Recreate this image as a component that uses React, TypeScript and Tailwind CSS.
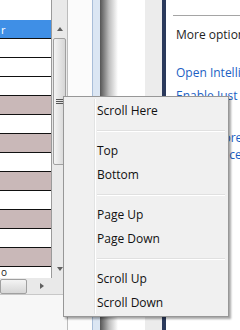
import React from "react";

const rows = ["blue", "white", "white", "white", "mauve", "white", "mauve", "white", "mauve", "white", "mauve", "white", "mauve"];

function ArrowUp() {
  return <div className="w-0 h-0 border-l-[3px] border-r-[3px] border-b-[4px] border-l-transparent border-r-transparent border-b-[#606060]" />;
}
function ArrowDown() {
  return <div className="w-0 h-0 border-l-[3px] border-r-[3px] border-t-[4px] border-l-transparent border-r-transparent border-t-[#606060]" />;
}
function ArrowRight() {
  return <div className="w-0 h-0 border-t-[3px] border-b-[3px] border-l-[4px] border-t-transparent border-b-transparent border-l-[#606060]" />;
}

function MenuItem({ label }: { label: string }) {
  return (
    <div className="h-[24px] flex items-center pl-[33px] text-[12px] text-[#111]">{label}</div>
  );
}

function Separator() {
  return (
    <div className="h-[16px] flex flex-col justify-center pl-[33px] pr-[3px]">
      <div className="border-t border-[#e0e0e0]" />
      <div className="border-t border-white" />
    </div>
  );
}

export default function App() {
  return (
    <div
      className="relative w-[240px] h-[330px] overflow-hidden flex bg-white"
      style={{ fontFamily: '"Open Sans", "Noto Sans", sans-serif' }}
    >
      {/* list with scrollbars */}
      <div className="w-[68px] shrink-0 flex flex-col border-r border-[#bcbcbc]">
        <div className="flex h-[278px]">
          <div className="w-[52px] flex flex-col overflow-hidden border-r border-[#9a9a9a]">
            <div className="h-[20px] shrink-0 bg-white" />
            {rows.map((r, i) => (
              <div
                key={i}
                className={`h-[19px] shrink-0 border-b border-[#111] flex items-center pl-[1px] text-[11px] leading-none ${
                  r === "blue" ? "bg-[#3f8fe6] text-white" : r === "mauve" ? "bg-[#c9b8b8]" : "bg-white text-[#222]"
                }`}
              >
                {i === 0 ? <span>r</span> : null}
              </div>
            ))}
            <div className="flex-1 bg-white pl-[1px] text-[10px] leading-[10px] text-[#222]">o</div>
          </div>
          <div className="flex-1 flex flex-col bg-[#e9e9e9]">
            <div className="h-[20px]" />
            <div className="h-[18px] flex items-center justify-center">
              <ArrowUp />
            </div>
            <div className="h-[127px] mx-[1px] rounded-[2px] border border-[#a0a0a0] bg-gradient-to-r from-[#f4f4f4] to-[#d6d6d6] flex flex-col items-center justify-center gap-[1px]">
              <div className="w-[7px] border-t border-[#555]" />
              <div className="w-[7px] border-t border-[#555]" />
              <div className="w-[7px] border-t border-[#555]" />
            </div>
            <div className="flex-1" />
            <div className="h-[18px] flex items-center justify-center">
              <ArrowDown />
            </div>
          </div>
        </div>
        <div className="h-[17px] flex bg-[#e9e9e9] border-b border-[#c8c8c8]">
          <div className="w-[52px] flex items-center">
            <div className="w-[27px] h-[15px] rounded-[2px] border border-[#a0a0a0] bg-gradient-to-b from-[#f4f4f4] to-[#d6d6d6]" />
            <div className="flex-1 flex justify-end pr-[8px]">
              <ArrowRight />
            </div>
          </div>
          <div className="flex-1" />
        </div>
        <div className="flex-1 bg-[#f7f7f7]" />
      </div>

      {/* window frame area */}
      <div className="w-[24px] shrink-0 bg-[#fbfbfb]" />
      <div className="w-[8px] shrink-0 bg-[#dbe6f3] border-l border-[#a8bdd8]" />
      <div className="w-[18px] shrink-0 bg-gradient-to-r from-[#555555] via-[#bdbdbd] to-white" />
      <div className="w-[27px] shrink-0 bg-white" />
      <div className="w-[17px] shrink-0 bg-[#ececec]" />
      <div className="w-[4px] shrink-0 bg-[#2b3a5c]" />

      {/* options pane */}
      <div className="flex-1 min-w-0 flex flex-col text-[12px] leading-[16px] whitespace-nowrap">
        <div className="mt-[15px] ml-[7px] border-t border-[#a5a5a5]" />
        <div className="mt-[11px] ml-[10px] text-[#1e1e1e]">More options</div>
        <div className="mt-[22px] ml-[10px] text-[#1c5fc4]">Open IntelliTrace</div>
        <div className="mt-[7px] ml-[10px] text-[#1c5fc4]">Enable Just My Code</div>
        <div className="mt-[26px] ml-[1px] text-[#1c5fc4]">Explore more</div>
        <div className="mt-[1px] ml-[3px] text-[#1c5fc4]">Performance</div>
      </div>

      {/* context menu */}
      <div className="absolute left-[63px] top-[96px] w-[166px] h-[221px] bg-[#f0f0f0] border border-[#979797] shadow-[2px_2px_2px_rgba(0,0,0,0.35)] py-[2px]">
        <div className="absolute left-[30px] top-[2px] bottom-[2px] w-[2px] border-l border-[#e2e3e3] border-r border-r-white" />
        <div className="relative flex flex-col">
          <MenuItem label="Scroll Here" />
          <Separator />
          <MenuItem label="Top" />
          <MenuItem label="Bottom" />
          <Separator />
          <MenuItem label="Page Up" />
          <MenuItem label="Page Down" />
          <Separator />
          <MenuItem label="Scroll Up" />
          <MenuItem label="Scroll Down" />
        </div>
      </div>
    </div>
  );
}
